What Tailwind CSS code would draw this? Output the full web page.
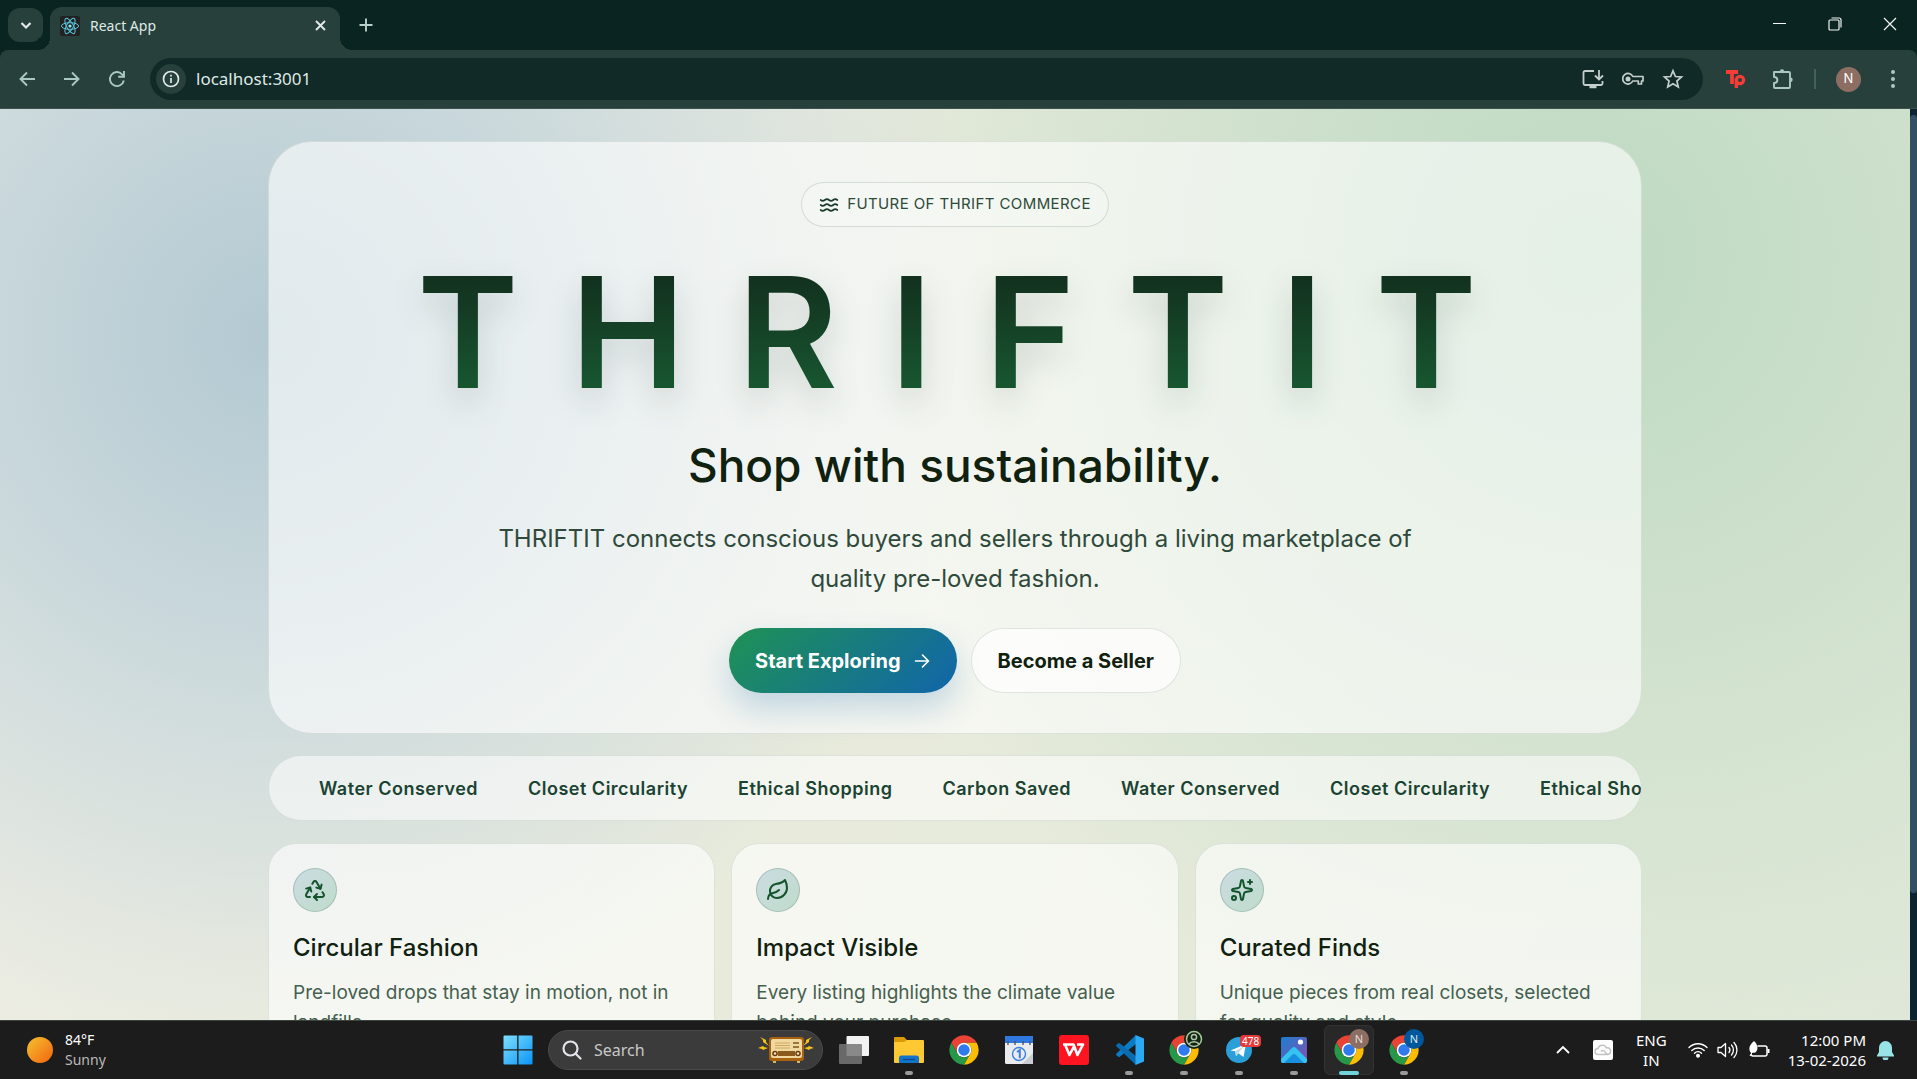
<!DOCTYPE html>
<html lang="en">
<head>
    <meta charset="UTF-8">
    <meta name="viewport" content="width=device-width, initial-scale=1.0">
    <title>React App</title>
    <script src="https://cdn.jsdelivr.net/npm/@tailwindcss/browser@4"></script>
</head>
<body class="h-screen flex flex-col overflow-hidden bg-[#0a2421] font-['Inter',sans-serif]">

    <!-- Shared icons -->
    <svg class="hidden">
        <symbol id="chrome-logo" viewBox="0 0 48 48">
            <path fill="#ea4335" d="M24 13L43.05 13A22 22 0 0 0 4.95 13L14.47 29.5A11 11 0 0 1 24 13Z"/>
            <path fill="#279847" d="M14.47 29.5L4.95 13A22 22 0 0 0 24 46L33.53 29.5A11 11 0 0 1 14.47 29.5Z"/>
            <path fill="#fbbc04" d="M33.53 29.5L24 46A22 22 0 0 0 43.05 13L24 13A11 11 0 0 1 33.53 29.5Z"/>
            <circle cx="24" cy="24" r="11" fill="#fff"/>
            <circle cx="24" cy="24" r="8.6" fill="#2f7bee"/>
        </symbol>
    </svg>

    <!-- Tab strip -->
    <header class="h-[50px] shrink-0 flex items-start pl-2 text-[#dfe9e5]">
        <button type="button" aria-label="Search tabs" class="mt-2 w-[35px] h-[34px] rounded-xl bg-[#28403c] flex items-center justify-center">
            <svg class="w-4 h-4" viewBox="0 0 16 16" fill="none" stroke="currentColor" stroke-width="2.2"><path d="M3.500 6l4.500 4.500L12.500 6"/></svg>
        </button>
        <div class="relative mt-[7px] ml-[7px] w-[290px] h-[43px] rounded-t-xl bg-[#28403c] flex items-center px-[10px] pb-[6px] gap-[10px]">
            <span class="absolute bottom-0 -left-3 w-3 h-3 bg-[radial-gradient(circle_at_0_0,#0a2421_12px,#28403c_12px)]"></span>
            <span class="absolute bottom-0 -right-3 w-3 h-3 bg-[radial-gradient(circle_at_100%_0,#0a2421_12px,#28403c_12px)]"></span>
            <svg class="w-5 h-5" viewBox="0 0 20 20" fill="none" stroke="#58c4dc" stroke-width="1">
                <rect width="20" height="20" rx="2" fill="#222" stroke="none"/>
                <ellipse cx="10" cy="10" rx="8.600" ry="3.300"/>
                <ellipse cx="10" cy="10" rx="8.600" ry="3.300" transform="rotate(60 10 10)"/>
                <ellipse cx="10" cy="10" rx="8.600" ry="3.300" transform="rotate(120 10 10)"/>
                <circle cx="10" cy="10" r="1.600" fill="#8ce6f5" stroke="none"/>
            </svg>
            <span class="flex-1 text-[14px] font-['Noto_Sans',sans-serif]">React App</span>
            <button type="button" aria-label="Close tab" class="w-5 h-5 flex items-center justify-center">
                <svg class="w-[11px] h-[11px]" viewBox="0 0 11 11" stroke="currentColor" stroke-width="1.900"><path d="M1 1l9 9M10 1l-9 9"/></svg>
            </button>
        </div>
        <button type="button" aria-label="New tab" class="mt-[17px] ml-[18px] w-4 h-4 text-[#b9d0cb]">
            <svg class="w-4 h-4" viewBox="0 0 16 16" stroke="currentColor" stroke-width="1.900"><path d="M8 1.500v13M1.500 8h13"/></svg>
        </button>
        <div class="ml-auto flex text-[#f2f6f4]">
            <button type="button" aria-label="Minimize" class="w-14 h-12 flex items-center justify-center">
                <svg class="w-[14px] h-[14px]" viewBox="0 0 14 14" stroke="currentColor" stroke-width="1"><path d="M1 6.500h13"/></svg>
            </button>
            <button type="button" aria-label="Restore" class="w-14 h-12 flex items-center justify-center">
                <svg class="w-[14px] h-[14px]" viewBox="0 0 14 14" fill="none" stroke="currentColor" stroke-width="1.200"><rect x="1" y="3" width="10" height="10" rx="1"/><path d="M3.500 1h7.500a2 2 0 0 1 2 2v7.500"/></svg>
            </button>
            <button type="button" aria-label="Close" class="w-[54px] h-12 flex items-center justify-center">
                <svg class="w-[14px] h-[14px]" viewBox="0 0 14 14" stroke="currentColor" stroke-width="1.200"><path d="M1 1l12 12M13 1L1 13"/></svg>
            </button>
        </div>
    </header>

    <!-- Toolbar -->
    <nav class="h-[59px] shrink-0 flex items-center pl-[17px] pr-[14px] rounded-t-lg bg-[#28403c] border-b border-[#3f514d] text-[#aac9c3]">
        <div class="flex gap-[25px]">
            <button type="button" aria-label="Back">
                <svg class="w-5 h-5" viewBox="0 0 20 20" fill="none" stroke="currentColor" stroke-width="1.900"><path d="M18 10H4M10 3.500L3.500 10l6.500 6.500"/></svg>
            </button>
            <button type="button" aria-label="Forward">
                <svg class="w-5 h-5" viewBox="0 0 20 20" fill="none" stroke="currentColor" stroke-width="1.900"><path d="M2 10h14M10 3.500l6.500 6.500-6.500 6.500"/></svg>
            </button>
            <button type="button" aria-label="Reload">
                <svg class="w-5 h-5" viewBox="0 0 20 20" fill="none" stroke="currentColor" stroke-width="1.900"><path d="M16.800 11.500a7 7 0 1 1-1.700-6.200L17 7.200M17 2v5.800h-5.800"/></svg>
            </button>
        </div>
        <div class="ml-[23px] flex-1 h-[42px] rounded-full bg-[#112a27] flex items-center pl-[6px] pr-[19px]">
            <button type="button" aria-label="View site information" class="w-[30px] h-[30px] rounded-full bg-[#28403c] text-[#dfe9e5] flex items-center justify-center">
                <svg class="w-[18px] h-[18px]" viewBox="0 0 18 18" fill="none" stroke="currentColor" stroke-width="1.700"><circle cx="9" cy="9" r="7.500"/><path d="M9 8v5M9 4.800v1.800"/></svg>
            </button>
            <input type="text" aria-label="Address" value="localhost:3001" class="ml-[10px] flex-1 bg-transparent text-[17px] text-[#dfe9e5] font-['Noto_Sans',sans-serif] outline-none">
            <div class="flex gap-[18px] text-[#c3cfcc]">
                <button type="button" aria-label="Install app">
                    <svg class="w-[22px] h-[22px]" viewBox="0 0 22 22" fill="none" stroke="currentColor" stroke-width="1.800"><path d="M12 3H3a1.500 1.500 0 0 0-1.500 1.500v11A1.500 1.500 0 0 0 3 17h16a1.500 1.500 0 0 0 1.500-1.500V13"/><path d="M17 2v9M13 7.500l4 4 4-4"/><path d="M7.500 19h7" stroke-width="2.500"/></svg>
                </button>
                <button type="button" aria-label="Passwords">
                    <svg class="w-[22px] h-[22px]" viewBox="0 0 22 22" fill="none" stroke="currentColor" stroke-width="1.700"><path d="M10.800 8.500H21V13h-1.500v3h-3.200v-3h-5.500a5.300 5.300 0 1 1 0-4.500Z" stroke-linejoin="round"/><circle cx="6" cy="11" r="2.500" fill="currentColor" stroke="none"/></svg>
                </button>
                <button type="button" aria-label="Bookmark this page">
                    <svg class="w-[22px] h-[22px]" viewBox="0 0 22 22" fill="none" stroke="currentColor" stroke-width="1.700"><path d="M11 2.800l2.400 5.700 6.100.5-4.600 4 1.400 6-5.300-3.200-5.300 3.200 1.400-6-4.600-4 6.100-.5z"/></svg>
                </button>
            </div>
        </div>
        <button type="button" aria-label="Tp extension" class="ml-[23px] w-[22px] text-[#f63c37]">
            <svg class="w-[20px] h-[20px]" viewBox="0 0 20 20" fill="none" stroke="currentColor" stroke-width="3.800"><path d="M0 3h12M6 3v12"/><circle cx="14" cy="11" r="3.600" stroke-width="3.200"/><path d="M10.300 9.500V19" stroke-width="3.400"/></svg>
        </button>
        <button type="button" aria-label="Extensions" class="ml-[24px]">
            <svg class="w-[22px] h-[22px]" viewBox="0 0 22 22" fill="none" stroke="currentColor" stroke-width="1.900" stroke-linejoin="round"><path d="M2 4h15a1 1 0 0 1 1 1v14a1 1 0 0 1-1 1H3a1 1 0 0 1-1-1v-4c4.500 0 4.500-6 0-6z"/><path d="M7.800 3.500a2.200 2.200 0 0 1 4.400 0zM18.500 9.500a2.200 2.200 0 0 1 0 4.400z" fill="currentColor" stroke="none"/></svg>
        </button>
        <span class="ml-[20px] w-[2px] h-5 bg-[#42615b]"></span>
        <button type="button" aria-label="Profile" class="ml-[20px] w-[25px] h-[25px] rounded-full bg-[#8d6e63] text-white text-[13px] flex items-center justify-center">N</button>
        <button type="button" aria-label="Menu" class="ml-[22px] w-5 flex justify-center">
            <svg class="w-5 h-5" viewBox="0 0 20 20" fill="currentColor"><circle cx="10" cy="3" r="2"/><circle cx="10" cy="10" r="2"/><circle cx="10" cy="17" r="2"/></svg>
        </button>
    </nav>

    <!-- Page -->
    <div class="flex-1 min-h-0 flex">
        <main class="flex-1 min-w-0 overflow-hidden pt-8 bg-[radial-gradient(circle_at_14%_25%,#b3c9d2_0,#c8d7db_280px,#c8d7db00_720px),radial-gradient(circle_at_83%_16%,#bdd9c2_0,#bdd9c200_800px),linear-gradient(115deg,#efeee6,#e8ebdb_50%,#dfe8d8)]">
            <div class="max-w-[1374px] mx-auto">

                <!-- Hero -->
                <section class="rounded-[44px] border border-[#1b43321c] bg-white/60 py-10 flex flex-col items-center text-center">
                    <p class="h-[45px] px-[17px] rounded-full border border-[#1b433226] bg-white/20 flex items-center gap-2 text-[15px] tracking-[0.4px] text-[#2d4a3a]">
                        <svg class="w-5 h-5 text-[#1b3a2a]" viewBox="0 0 24 24" fill="none" stroke="currentColor" stroke-width="2" stroke-linecap="round"><path d="M2 6c.6.5 1.200 1 2.500 1C7 7 7 5 9.500 5c2.600 0 2.400 2 5 2 2.500 0 2.500-2 5-2 1.300 0 1.900.5 2.500 1"/><path d="M2 12c.6.5 1.200 1 2.500 1 2.500 0 2.500-2 5-2 2.600 0 2.400 2 5 2 2.500 0 2.500-2 5-2 1.300 0 1.900.5 2.500 1"/><path d="M2 18c.6.5 1.200 1 2.500 1 2.500 0 2.500-2 5-2 2.600 0 2.400 2 5 2 2.500 0 2.500-2 5-2 1.300 0 1.900.5 2.500 1"/></svg>
                        FUTURE OF THRIFT COMMERCE
                    </p>
                    <h1 class="mt-[40px] pl-9 text-[154px] leading-[130px] font-semibold tracking-[52px] bg-linear-to-b from-[#12321f] from-10% to-[#17552f] to-90% bg-clip-text text-transparent drop-shadow-[0_14px_16px_rgba(20,50,35,0.16)]">THRIFTIT</h1>
                    <h2 class="mt-[40px] text-[46px] leading-[56px] font-medium text-[#10210f]">Shop with sustainability.</h2>
                    <p class="mt-[26px] max-w-[940px] text-[24px] leading-[40px] text-[#2f4a3b]">THRIFTIT connects conscious buyers and sellers through a living marketplace of quality pre-loved fashion.</p>
                    <div class="mt-[29px] flex gap-[14px]">
                        <a href="#explore" class="h-[65px] px-[26px] rounded-full bg-[linear-gradient(135deg,#1f9254,#1165aa)] shadow-[0_16px_32px_rgba(17,101,170,0.22)] flex items-center gap-3 text-[20px] font-bold text-white">
                            Start Exploring
                            <svg class="w-[18px] h-[18px]" viewBox="0 0 18 18" fill="none" stroke="currentColor" stroke-width="1.600" stroke-linecap="round" stroke-linejoin="round"><path d="M2.500 9h13M9.500 3l6 6-6 6"/></svg>
                        </a>
                        <a href="#sell" class="h-[65px] px-[26px] rounded-full border border-[#1b433220] bg-white/70 flex items-center text-[20px] font-bold text-[#10210f]">Become a Seller</a>
                    </div>
                </section>

                <!-- Marquee -->
                <div class="mt-[21px] h-[66px] rounded-full border border-[#1b43321c] bg-white/55 overflow-hidden flex items-center gap-[50px] pl-[50px] whitespace-nowrap text-[18px] font-semibold tracking-[0.5px] text-[#1b4332]">
                    <span>Water Conserved</span>
                    <span>Closet Circularity</span>
                    <span>Ethical Shopping</span>
                    <span>Carbon Saved</span>
                    <span>Water Conserved</span>
                    <span>Closet Circularity</span>
                    <span>Ethical Shopping</span>
                </div>

                <!-- Feature cards -->
                <section class="mt-[22px] grid grid-cols-3 gap-4">
                    <article class="rounded-[28px] border border-[#1b43321c] bg-white/60 p-6">
                        <div class="w-11 h-11 rounded-full border border-[#1b433230] bg-linear-135 from-[#cbdce2] to-[#bfdccb] flex items-center justify-center text-[#14532d]">
                            <svg class="w-6 h-6" viewBox="0 0 24 24" fill="none" stroke="currentColor" stroke-width="2" stroke-linecap="round" stroke-linejoin="round"><path d="M7 19H4.815a1.830 1.830 0 0 1-1.570-.881 1.785 1.785 0 0 1-.004-1.784L7.196 9.500"/><path d="M11 19h8.203a1.830 1.830 0 0 0 1.556-.890 1.784 1.784 0 0 0 0-1.775l-1.226-2.120"/><path d="m14 16-3 3 3 3"/><path d="M8.293 13.596 7.196 9.500 3.100 10.598"/><path d="m9.344 5.811 1.093-1.892A1.830 1.830 0 0 1 11.985 3a1.784 1.784 0 0 1 1.546.888l3.943 6.843"/><path d="m13.378 9.633 4.096 1.098 1.097-4.096"/></svg>
                        </div>
                        <h3 class="mt-5 text-[24px] leading-8 font-medium text-[#10210f]">Circular Fashion</h3>
                        <p class="mt-[14px] text-[19px] leading-[30px] text-[#45604f]">Pre-loved drops that stay in motion, not in landfills.</p>
                    </article>
                    <article class="rounded-[28px] border border-[#1b43321c] bg-white/60 p-6">
                        <div class="w-11 h-11 rounded-full border border-[#1b433230] bg-linear-135 from-[#cbdce2] to-[#bfdccb] flex items-center justify-center text-[#14532d]">
                            <svg class="w-6 h-6" viewBox="0 0 24 24" fill="none" stroke="currentColor" stroke-width="2" stroke-linecap="round" stroke-linejoin="round"><path d="M11 20A7 7 0 0 1 9.800 6.100C15.500 5 17 4.480 19 2c1 2 2 4.180 2 8 0 5.500-4.780 10-10 10Z"/><path d="M2 21c0-3 1.850-5.360 5.080-6C9.500 14.520 12 13 13 12"/></svg>
                        </div>
                        <h3 class="mt-5 text-[24px] leading-8 font-medium text-[#10210f]">Impact Visible</h3>
                        <p class="mt-[14px] text-[19px] leading-[30px] text-[#45604f]">Every listing highlights the climate value behind your purchase.</p>
                    </article>
                    <article class="rounded-[28px] border border-[#1b43321c] bg-white/60 p-6">
                        <div class="w-11 h-11 rounded-full border border-[#1b433230] bg-linear-135 from-[#cbdce2] to-[#bfdccb] flex items-center justify-center text-[#14532d]">
                            <svg class="w-6 h-6" viewBox="0 0 24 24" fill="none" stroke="currentColor" stroke-width="2" stroke-linecap="round" stroke-linejoin="round"><path d="M11.017 2.814a1 1 0 0 1 1.966 0l1.051 5.558a2 2 0 0 0 1.594 1.594l5.558 1.051a1 1 0 0 1 0 1.966l-5.558 1.051a2 2 0 0 0-1.594 1.594l-1.051 5.558a1 1 0 0 1-1.966 0l-1.051-5.558a2 2 0 0 0-1.594-1.594l-5.558-1.051a1 1 0 0 1 0-1.966l5.558-1.051a2 2 0 0 0 1.594-1.594z"/><path d="M20 2v4"/><path d="M22 4h-4"/><circle cx="4" cy="20" r="2"/></svg>
                        </div>
                        <h3 class="mt-5 text-[24px] leading-8 font-medium text-[#10210f]">Curated Finds</h3>
                        <p class="mt-[14px] text-[19px] leading-[30px] text-[#45604f]">Unique pieces from real closets, selected for quality and style.</p>
                    </article>
                </section>
            </div>
        </main>

        <!-- Scrollbar -->
        <div class="w-[7px] bg-[#0e2330] pt-[6px]">
            <div class="h-[86%] rounded-full bg-[#335062]"></div>
        </div>
    </div>

    <!-- Taskbar -->
    <footer class="h-[59px] shrink-0 flex items-center bg-[#1c1c1c] border-t border-[#3b443f] text-white font-['Noto_Sans',sans-serif]">
        <div class="flex-1 flex items-center gap-3 pl-[27px]">
            <span class="w-[26px] h-[26px] rounded-full bg-linear-135 from-[#f2c230] to-[#f0600c]"></span>
            <div class="text-[14px] leading-5">
                <p>84°F</p>
                <p class="text-[#b9b9b9]">Sunny</p>
            </div>
        </div>

        <div class="flex items-center h-full">
            <button type="button" aria-label="Start" class="w-[55px] flex justify-center">
                <svg class="w-[30px] h-[30px]" viewBox="0 0 30 30">
                    <defs><linearGradient id="win" x1="0" y1="0" x2="1" y2="1"><stop offset="0" stop-color="#7ee0ff"/><stop offset="1" stop-color="#0a93f5"/></linearGradient></defs>
                    <path fill="url(#win)" d="M1.500.5h12.700v13.700H.5V1.500a1 1 0 0 1 1-1zM15.500.5h13a1 1 0 0 1 1 1v12.700h-14zM.5 15.500h13.700v14H1.500a1 1 0 0 1-1-1zM15.500 15.500h14v13a1 1 0 0 1-1 1h-13z"/>
                </svg>
            </button>
            <label class="ml-[3px] w-[275px] h-10 rounded-full bg-[#3b3b3b] border border-[#4a4a4a] flex items-center pl-[13px] pr-[7px]">
                <svg class="w-5 h-5 shrink-0" viewBox="0 0 20 20" fill="none" stroke="#e3e3ea" stroke-width="2.200" stroke-linecap="round"><circle cx="8.500" cy="8.500" r="7"/><path d="M13.500 13.500l5 5"/></svg>
                <input type="text" aria-label="Search" placeholder="Search" class="ml-3 flex-1 min-w-0 bg-transparent text-[16px] placeholder:text-[#c8c8c8] outline-none">
                <svg class="w-[58px] h-[30px] shrink-0" viewBox="0 0 58 30">
                    <g fill="#f5c518"><path d="M3 2l6 3v2l3 4-6-4V5zM1 13l5-2 1 1 4 1-5 2-1-1zM55 2l-6 3v2l-3 4 6-4V5zM57 13l-5-2-1 1-4 1 5 2 1-1z"/></g>
                    <rect x="12" y="2" width="35" height="24" rx="3" fill="#a8620f"/>
                    <rect x="14" y="4" width="31" height="19" rx="2" fill="#f0d9a0"/>
                    <path d="M18 8h15M18 10.500h15M18 13h15" stroke="#d0a860" stroke-width="1"/>
                    <path d="M36 8h6M36 12h6" stroke="#7d5418" stroke-width="1.600"/>
                    <rect x="21" y="16" width="17" height="5" fill="#8a5a1c"/>
                    <circle cx="18" cy="18.500" r="2.800" fill="#6b3e10"/><circle cx="41" cy="18.500" r="2.800" fill="#6b3e10"/>
                    <circle cx="18" cy="18.500" r="1.200" fill="#f6e6bf"/><circle cx="41" cy="18.500" r="1.200" fill="#f6e6bf"/>
                    <path d="M16 26h3v2h-3zM40 26h3v2h-3z" fill="#d9b36a"/>
                </svg>
            </label>
            <button type="button" aria-label="Task view" class="ml-[3px] w-[55px] flex justify-center">
                <svg class="w-[30px] h-[30px]" viewBox="0 0 30 30"><rect x="7.500" y="1" width="22.500" height="20" rx="1" fill="#f2f2f2"/><rect x="0" y="9" width="23" height="20" rx="1" fill="#777" fill-opacity=".85"/></svg>
            </button>
            <button type="button" aria-label="File Explorer" class="relative w-[55px] h-full flex items-center justify-center">
                <svg class="w-[30px] h-[28px]" viewBox="0 0 30 28"><path fill="#d99a09" d="M0 2a1 1 0 0 1 1-1h9l3 3h8v8H0z"/><path fill="#ffc933" d="M0 6h10l3-2h16a1 1 0 0 1 1 1v21a1 1 0 0 1-1 1H1a1 1 0 0 1-1-1z"/><path fill="#1173c9" d="M5 27v-5a2.500 2.500 0 0 1 2.500-2.500h15A2.500 2.500 0 0 1 25 22v5z"/><path d="M9 23.500h12" stroke="#0b4a86" stroke-width="1.200"/></svg>
                <span class="absolute bottom-1 w-2 h-1 rounded-full bg-[#9a9a9a]"></span>
            </button>
            <button type="button" aria-label="Chrome" class="w-[55px] flex justify-center">
                <svg class="w-8 h-8"><use href="#chrome-logo"/></svg>
            </button>
            <button type="button" aria-label="Calendar" class="w-[55px] flex justify-center">
                <svg class="w-7 h-7" viewBox="0 0 28 28" fill="none"><rect width="28" height="28" rx="1.500" fill="#e9ebee"/><path d="M0 1.500A1.500 1.500 0 0 1 1.500 0h25A1.500 1.500 0 0 1 28 1.500V7H0z" fill="#2f78e0"/><path d="M3 5v4M10 5v4M18 5v4M25 5v4" stroke="#47505e" stroke-width="1.300"/><path d="M28 17L17 28h11z" fill="#c9ccd0"/><circle cx="14" cy="18" r="6.500" stroke="#3b7fe0" stroke-width="1.400"/><path d="M12 16l2.800-1.800v8" stroke="#3b7fe0" stroke-width="2"/></svg>
            </button>
            <button type="button" aria-label="WPS Office" class="w-[55px] flex justify-center">
                <svg class="w-[30px] h-[30px]" viewBox="0 0 30 30" fill="none"><rect width="30" height="30" rx="3" fill="#fc1420"/><path d="M4 9.500h10.500L18.500 20l5.500-10.500h-6M6 9.500L10.500 20l5-9.500" stroke="#fff" stroke-width="2.600" stroke-linejoin="round"/></svg>
            </button>
            <button type="button" aria-label="Visual Studio Code" class="relative w-[55px] h-full flex items-center justify-center">
                <svg class="w-[30px] h-[30px]" viewBox="0 0 30 30"><path fill="#0b7bc4" d="M22 0L2.500 18.500a1.200 1.200 0 0 0 0 1.800l1.700 1.500a1.200 1.200 0 0 0 1.500 0L22 9z"/><path fill="#0a6cb0" d="M22 30L2.500 11.500a1.200 1.200 0 0 1 0-1.800l1.700-1.500a1.200 1.200 0 0 1 1.500 0L22 21z"/><path fill="#2aaaf4" d="M21.500 0L30 3.500v23L21.500 30z"/></svg>
                <span class="absolute bottom-1 w-2 h-1 rounded-full bg-[#9a9a9a]"></span>
            </button>
            <button type="button" aria-label="Chrome, guest profile" class="relative w-[55px] h-full flex items-center justify-center">
                <svg class="w-8 h-8"><use href="#chrome-logo"/></svg>
                <svg class="absolute top-[8px] left-[28px] w-5 h-5" viewBox="0 0 20 20" fill="none" stroke="#a9c7a5" stroke-width="1.500"><circle cx="10" cy="10" r="10" fill="#14230f" stroke="none"/><circle cx="10" cy="10" r="7.500"/><circle cx="10" cy="8" r="2.600"/><path d="M5 15c2-3 8-3 10 0"/></svg>
                <span class="absolute bottom-1 w-2 h-1 rounded-full bg-[#9a9a9a]"></span>
            </button>
            <button type="button" aria-label="Telegram" class="relative w-[55px] h-full flex items-center justify-center">
                <svg class="w-[26px] h-[26px]" viewBox="0 0 26 26"><circle cx="13" cy="13" r="13" fill="#2a9fd8"/><path fill="#fff" d="M4.500 13.500L20 7l-2.500 13-5-3.700L10 19l-.8-4.700z"/><path fill="#b9d9ec" d="M9.200 14.300L18 9l-6 7.200L10 19z"/></svg>
                <span class="absolute top-[14px] left-[29px] px-[2px] rounded-[4px] bg-[#e5393c] text-[10px] leading-3">478</span>
                <span class="absolute bottom-1 w-2 h-1 rounded-full bg-[#9a9a9a]"></span>
            </button>
            <button type="button" aria-label="Photos" class="relative w-[55px] h-full flex items-center justify-center">
                <svg class="w-[26px] h-[26px]" viewBox="0 0 26 26">
                    <defs><linearGradient id="sky" x1="0" y1="0" x2="1" y2="1"><stop offset="0" stop-color="#1a7fd0"/><stop offset="1" stop-color="#8a4db0"/></linearGradient></defs>
                    <rect width="26" height="26" rx="2" fill="url(#sky)"/><path fill="#35c4f2" d="M0 22l11-11a3 3 0 0 1 4 0l11 11v2a2 2 0 0 1-2 2H2a2 2 0 0 1-2-2z"/><path fill="#1a8fe0" d="M3 26l8-8a3 3 0 0 1 4 0l8 8z"/><circle cx="19.500" cy="5" r="2.600" fill="#fff"/></svg>
                <span class="absolute bottom-1 w-2 h-1 rounded-full bg-[#9a9a9a]"></span>
            </button>
            <button type="button" aria-label="Chrome, active window" class="relative w-[55px] h-full flex items-center justify-center">
                <span class="w-[50px] h-[50px] rounded-md border border-[#333] bg-[#282828] flex items-center justify-center"><svg class="w-8 h-8"><use href="#chrome-logo"/></svg></span>
                <span class="absolute top-[8px] left-[28px] w-5 h-5 rounded-full bg-[#8d6e63] text-[11px] leading-5 text-[#e9dfdb]">N</span>
                <span class="absolute bottom-1 w-5 h-1 rounded-full bg-[#6fd3d9]"></span>
            </button>
            <button type="button" aria-label="Chrome, second profile" class="relative w-[55px] h-full flex items-center justify-center">
                <svg class="w-8 h-8"><use href="#chrome-logo"/></svg>
                <span class="absolute top-[8px] left-[28px] w-5 h-5 rounded-full bg-[#01579b] text-[11px] leading-5 text-[#dce8f2]">N</span>
                <span class="absolute bottom-1 w-2 h-1 rounded-full bg-[#9a9a9a]"></span>
            </button>
        </div>

        <div class="flex-1 flex items-center justify-end pr-[23px]">
            <svg class="w-[14px] h-[14px]" viewBox="0 0 14 14" fill="none" stroke="currentColor" stroke-width="1.800"><path d="M1 10l6-6 6 6"/></svg>
            <svg class="ml-[23px] w-5 h-5" viewBox="0 0 20 20" fill="none" stroke="#c4c4c4" stroke-width="1.500"><rect width="20" height="20" rx="2" fill="#fff" stroke="none"/><path d="M5 14.500a3 3 0 0 1 0-6 4.500 4.500 0 0 1 8.500-.5 3.300 3.300 0 0 1 1.500 6.500zM8 11.500a2.500 2.500 0 0 1 4.500 1.500l2 1"/></svg>
            <div class="ml-[23px] text-[15px] leading-5 text-center">
                <p>ENG</p>
                <p>IN</p>
            </div>
            <svg class="ml-[21px] w-5 h-[18px]" viewBox="0 0 20 18" fill="none" stroke="currentColor" stroke-width="1.400" stroke-linecap="round"><path d="M1 6.500a12.700 12.700 0 0 1 18 0M3.800 9.500a8.800 8.800 0 0 1 12.400 0M6.500 12.200a5 5 0 0 1 7 0"/><circle cx="10" cy="14.800" r="1.300" fill="currentColor"/></svg>
            <svg class="ml-[9px] w-[22px] h-[18px]" viewBox="0 0 22 18" fill="none" stroke="currentColor" stroke-width="1.300" stroke-linecap="round" stroke-linejoin="round"><path d="M1 6.500v5h3l4.500 4V2.500L4 6.500zM12 6.500a4 4 0 0 1 0 5M14.500 4a7.500 7.500 0 0 1 0 10M17 1.500a11 11 0 0 1 0 15"/></svg>
            <svg class="ml-[9px] w-[22px] h-[18px]" viewBox="0 0 22 18" fill="none" stroke="currentColor" stroke-width="1.500"><path d="M9.500 5H17a2 2 0 0 1 2 2v6a2 2 0 0 1-2 2H5a2 2 0 0 1-2-2"/><path d="M20.500 8v4" stroke-width="2"/><path d="M6 0c3.500 3 5 8 1.500 11.500L3 12C-.5 7.500 2 3.500 6 0z" fill="currentColor" stroke="none"/><path d="M2 15l4-7" stroke-width="1"/></svg>
            <div class="ml-[18px] text-[15px] leading-5 text-right">
                <p>12:00 PM</p>
                <p>13-02-2026</p>
            </div>
            <svg class="ml-[11px] w-[17px] h-[19px]" viewBox="0 0 17 19" fill="#97e3e6"><path d="M8.500 0a6.500 6.500 0 0 1 6.500 6.500V11l2 3.500v1H0v-1L2 11V6.500A6.500 6.500 0 0 1 8.500 0zM5.500 16.500h6a3 3 0 0 1-6 0z"/></svg>
        </div>
    </footer>
</body>
</html>
